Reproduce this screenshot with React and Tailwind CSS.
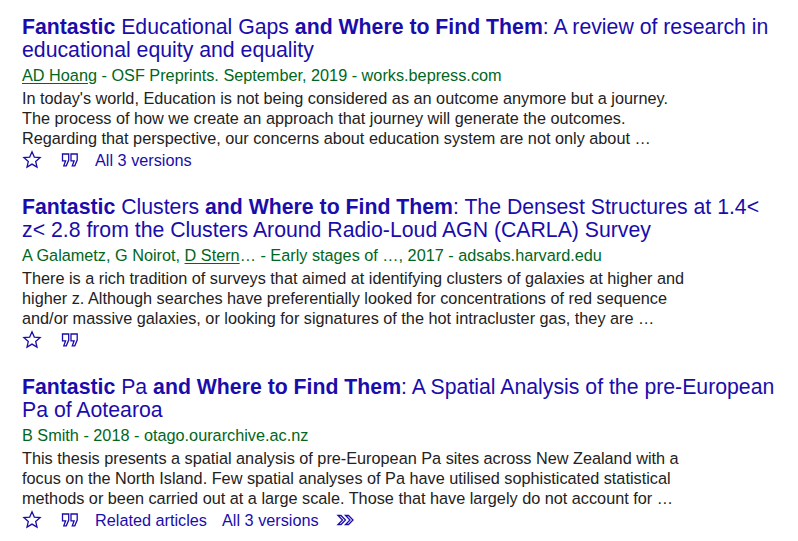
import React from 'react';

const results = [
  {
    title: [
      { b: true, t: 'Fantastic' },
      { t: ' Educational Gaps ' },
      { b: true, t: 'and Where to Find Them' },
      { t: ': A review of research in educational equity and equality' },
    ],
    authors: [{ u: true, t: 'AD Hoang' }, { t: ' - OSF Preprints. September, 2019 - works.bepress.com' }],
    snippet: [
      "In today's world, Education is not being considered as an outcome anymore but a journey.",
      'The process of how we create an approach that journey will generate the outcomes.',
      'Regarding that perspective, our concerns about education system are not only about …',
    ],
    links: ['All 3 versions'],
    more: false,
  },
  {
    title: [
      { b: true, t: 'Fantastic' },
      { t: ' Clusters ' },
      { b: true, t: 'and Where to Find Them' },
      { t: ': The Densest Structures at 1.4< z< 2.8 from the Clusters Around Radio-Loud AGN (CARLA) Survey' },
    ],
    authors: [
      { t: 'A Galametz, G Noirot, ' },
      { u: true, t: 'D Stern' },
      { t: '… - Early stages of …, 2017 - adsabs.harvard.edu' },
    ],
    snippet: [
      'There is a rich tradition of surveys that aimed at identifying clusters of galaxies at higher and',
      'higher z. Although searches have preferentially looked for concentrations of red sequence',
      'and/or massive galaxies, or looking for signatures of the hot intracluster gas, they are …',
    ],
    links: [],
    more: false,
  },
  {
    title: [
      { b: true, t: 'Fantastic' },
      { t: ' Pa ' },
      { b: true, t: 'and Where to Find Them' },
      { t: ': A Spatial Analysis of the pre-European Pa of Aotearoa' },
    ],
    authors: [{ t: 'B Smith - 2018 - otago.ourarchive.ac.nz' }],
    snippet: [
      'This thesis presents a spatial analysis of pre-European Pa sites across New Zealand with a',
      'focus on the North Island. Few spatial analyses of Pa have utilised sophisticated statistical',
      'methods or been carried out at a large scale. Those that have largely do not account for …',
    ],
    links: ['Related articles', 'All 3 versions'],
    more: true,
  },
];

const StarIcon = () => (
  <svg width="20" height="20" viewBox="0 0 20 20" className="shrink-0">
    <path
      d="M10 1.8l2.3 5.3 5.8.5-4.4 3.8 1.3 5.7L10 14.1l-5 3 1.3-5.7-4.4-3.8 5.8-.5z"
      fill="none"
      stroke="#1a0dab"
      strokeWidth="1.3"
      strokeLinejoin="miter"
    />
  </svg>
);

const CiteIcon = () => (
  <svg width="20" height="20" viewBox="0 0 20 20" className="shrink-0">
    <path
      d="M2.5 4h6.2v6l-2.4 5.8H3.8l1.8-5H2.5zM11 4h6.2v6l-2.4 5.8h-2.5l1.8-5H11z"
      fill="none"
      stroke="#1a0dab"
      strokeWidth="1.3"
      strokeLinejoin="miter"
    />
  </svg>
);

const MoreIcon = () => (
  <svg width="20" height="20" viewBox="0 0 20 20" className="shrink-0">
    <path
      d="M2 5.5h3l4.5 4.5L5 14.5H2L6.5 10zM9.5 5.5h3L17 10l-4.5 4.5h-3L14 10z"
      fill="none"
      stroke="#1a0dab"
      strokeWidth="1.3"
      strokeLinejoin="miter"
    />
  </svg>
);

const Result = ({ r }) => (
  <div className="mb-[24px]">
    <h3 className="text-[21.25px] leading-[23px] text-[#1a0dab] font-normal max-w-[764px]">
      {r.title.map((s, i) => (
        <span key={i} className={s.b ? 'font-bold' : ''}>
          {s.t}
        </span>
      ))}
    </h3>
    <div className="mt-[3px] text-[16.25px] leading-[20px] text-[#006621]">
      {r.authors.map((s, i) => (
        <span key={i} className={s.u ? 'underline underline-offset-2' : ''}>
          {s.t}
        </span>
      ))}
    </div>
    <div className="mt-[3px] text-[16.25px] leading-[20px] text-[#222]">
      {r.snippet.map((line, i) => (
        <div key={i}>{line}</div>
      ))}
    </div>
    <div className="flex items-center h-[24px] text-[16.25px] text-[#1a0dab]">
      <div className="w-[38px] flex">
        <StarIcon />
      </div>
      <div className="w-[35px] flex">
        <CiteIcon />
      </div>
      {r.links.map((l, i) => (
        <span key={i} className="mr-[15px]">
          {l}
        </span>
      ))}
      {r.more && (
        <div className="ml-[2px] flex">
          <MoreIcon />
        </div>
      )}
    </div>
  </div>
);

export default function App() {
  return (
    <div
      className="min-h-[541px] bg-white pl-[22px] pt-[16px]"
      style={{ fontFamily: '"Liberation Sans", Arial, sans-serif' }}
    >
      {results.map((r, i) => (
        <Result key={i} r={r} />
      ))}
    </div>
  );
}
